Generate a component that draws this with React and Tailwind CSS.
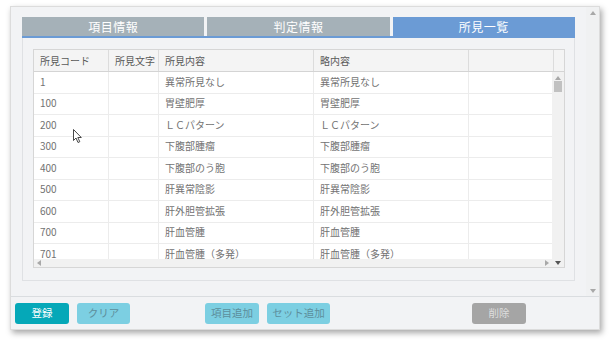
import React from "react";

const rows = [
  ["1", "異常所見なし"],
  ["100", "胃壁肥厚"],
  ["200", "ＬＣパターン"],
  ["300", "下腹部腫瘤"],
  ["400", "下腹部のう胞"],
  ["500", "肝異常陰影"],
  ["600", "肝外胆管拡張"],
  ["700", "肝血管腫"],
  ["701", "肝血管腫（多発）"],
];

const font = { fontFamily: '"Noto Sans CJK JP", "Noto Sans", sans-serif' };

function Tri({ dir, className }) {
  const pts = {
    up: "0,4 3,0 6,4",
    down: "0,0 6,0 3,4",
    left: "4,0 4,6 0,3",
    right: "0,0 0,6 4,3",
  }[dir];
  const w = dir === "up" || dir === "down" ? 6 : 4;
  const h = dir === "up" || dir === "down" ? 4 : 6;
  return (
    <svg width={w} height={h} className={className}>
      <polygon points={pts} fill="currentColor" />
    </svg>
  );
}

export default function App() {
  return (
    <div className="w-[610px] h-[344px] bg-white relative overflow-hidden" style={font}>
      <div className="ml-[10px] mt-[6px] w-[590px] h-[324px] bg-[#f2f3f5] border border-[#dcdcdc] shadow-[2px_3px_6px_rgba(0,0,0,0.35)] flex flex-col">
        <div className="flex h-[291px] border-b border-[#dadde0]">
          <div className="flex-1 pl-[11px] pt-[10px]">
            <div className="w-[553px] flex gap-[3px] h-[19px]">
              <div className="flex-1 bg-[#a5b1b8] text-white text-[12px] tracking-[0.5px] flex items-center justify-center">項目情報</div>
              <div className="flex-1 bg-[#a5b1b8] text-white text-[12px] tracking-[0.5px] flex items-center justify-center">判定情報</div>
              <div className="flex-1 bg-[#6b9bd5] text-white text-[12px] tracking-[0.5px] flex items-center justify-center">所見一覧</div>
            </div>
            <div className="w-[553px] h-[2px] bg-[#6b9bd5]"></div>
            <div className="w-[553px] h-[243px] border border-t-0 border-[#dfe1e4] pt-[11px] pl-[10px]">
              <div className="w-[532px] h-[219px] border border-[#d6d6d6] bg-white flex flex-col text-[10px] text-[#727272]">
                <div className="flex h-[22px] bg-[#f4f4f4] border-b border-[#d4d4d4] text-[#5a5a5a] shrink-0">
                  <div className="w-[75px] border-r border-[#dcdcdc] pl-[6px] flex items-center">所見コード</div>
                  <div className="w-[50px] border-r border-[#dcdcdc] pl-[6px] flex items-center">所見文字</div>
                  <div className="w-[155px] border-r border-[#dcdcdc] pl-[6px] flex items-center">所見内容</div>
                  <div className="w-[155px] border-r border-[#dcdcdc] pl-[6px] flex items-center">略内容</div>
                  <div className="w-[85px] border-r border-[#dcdcdc]"></div>
                  <div className="flex-1"></div>
                </div>
                <div className="flex flex-1 min-h-0">
                  <div className="flex-1 flex flex-col min-w-0">
                    <div className="flex-1 overflow-hidden">
                      {rows.map(([code, text]) => (
                        <div key={code} className="flex h-[21.5px] border-b border-[#ececec] leading-[12px]">
                          <div className="w-[75px] border-r border-[#ececec] pl-[6px] pb-[1px] flex items-center">{code}</div>
                          <div className="w-[50px] border-r border-[#ececec]"></div>
                          <div className="w-[155px] border-r border-[#ececec] pl-[6px] pb-[1px] flex items-center">{text}</div>
                          <div className="w-[155px] border-r border-[#ececec] pl-[6px] pb-[1px] flex items-center">{text}</div>
                          <div className="flex-1"></div>
                        </div>
                      ))}
                    </div>
                    <div className="h-[8px] bg-[#f1f1f1] flex items-center justify-between px-[3px] text-[#a8a8a8] shrink-0">
                      <Tri dir="left" />
                      <Tri dir="right" />
                    </div>
                  </div>
                  <div className="w-[12px] bg-[#f1f1f1] flex flex-col items-center pt-[4px] pb-[2px]">
                    <Tri dir="up" className="text-[#a8a8a8]" />
                    <div className="w-[8px] h-[11px] bg-[#c1c1c1] mt-[1px]"></div>
                    <div className="flex-1"></div>
                    <Tri dir="down" className="text-[#555]" />
                  </div>
                </div>
              </div>
            </div>
          </div>
          <div className="w-[13px] bg-[#f0f1f2] flex flex-col items-center pt-[4px] pb-[3px]">
            <Tri dir="up" className="text-[#a8a8a8]" />
            <div className="flex-1"></div>
            <Tri dir="down" className="text-[#a8a8a8]" />
          </div>
        </div>
        <div className="flex items-center h-[32px] pl-[4px] text-[10.5px]">
          <div className="w-[54px] h-[21px] rounded-[3px] bg-[#05a8b8] text-white flex items-center justify-center">登録</div>
          <div className="w-[53px] h-[21px] rounded-[3px] bg-[#7ccfe2] text-[#5d8e9c] flex items-center justify-center ml-[8px]">クリア</div>
          <div className="w-[54px] h-[21px] rounded-[3px] bg-[#7ccfe2] text-[#5d8e9c] flex items-center justify-center ml-[75px]">項目追加</div>
          <div className="w-[63px] h-[21px] rounded-[3px] bg-[#7ccfe2] text-[#5d8e9c] flex items-center justify-center ml-[8px]">セット追加</div>
          <div className="w-[54px] h-[21px] rounded-[3px] bg-[#a5a5a5] text-[#dedede] flex items-center justify-center ml-[142px]">削除</div>
        </div>
      </div>
      <svg className="absolute left-[73px] top-[129px]" width="10" height="15" viewBox="0 0 10 15">
        <path d="M0.5 0.5 L0.5 11.5 L3 9 L5 13.5 L6.8 12.7 L4.8 8.5 L8.3 8.5 Z" fill="white" stroke="#333" strokeWidth="0.9" />
      </svg>
    </div>
  );
}
